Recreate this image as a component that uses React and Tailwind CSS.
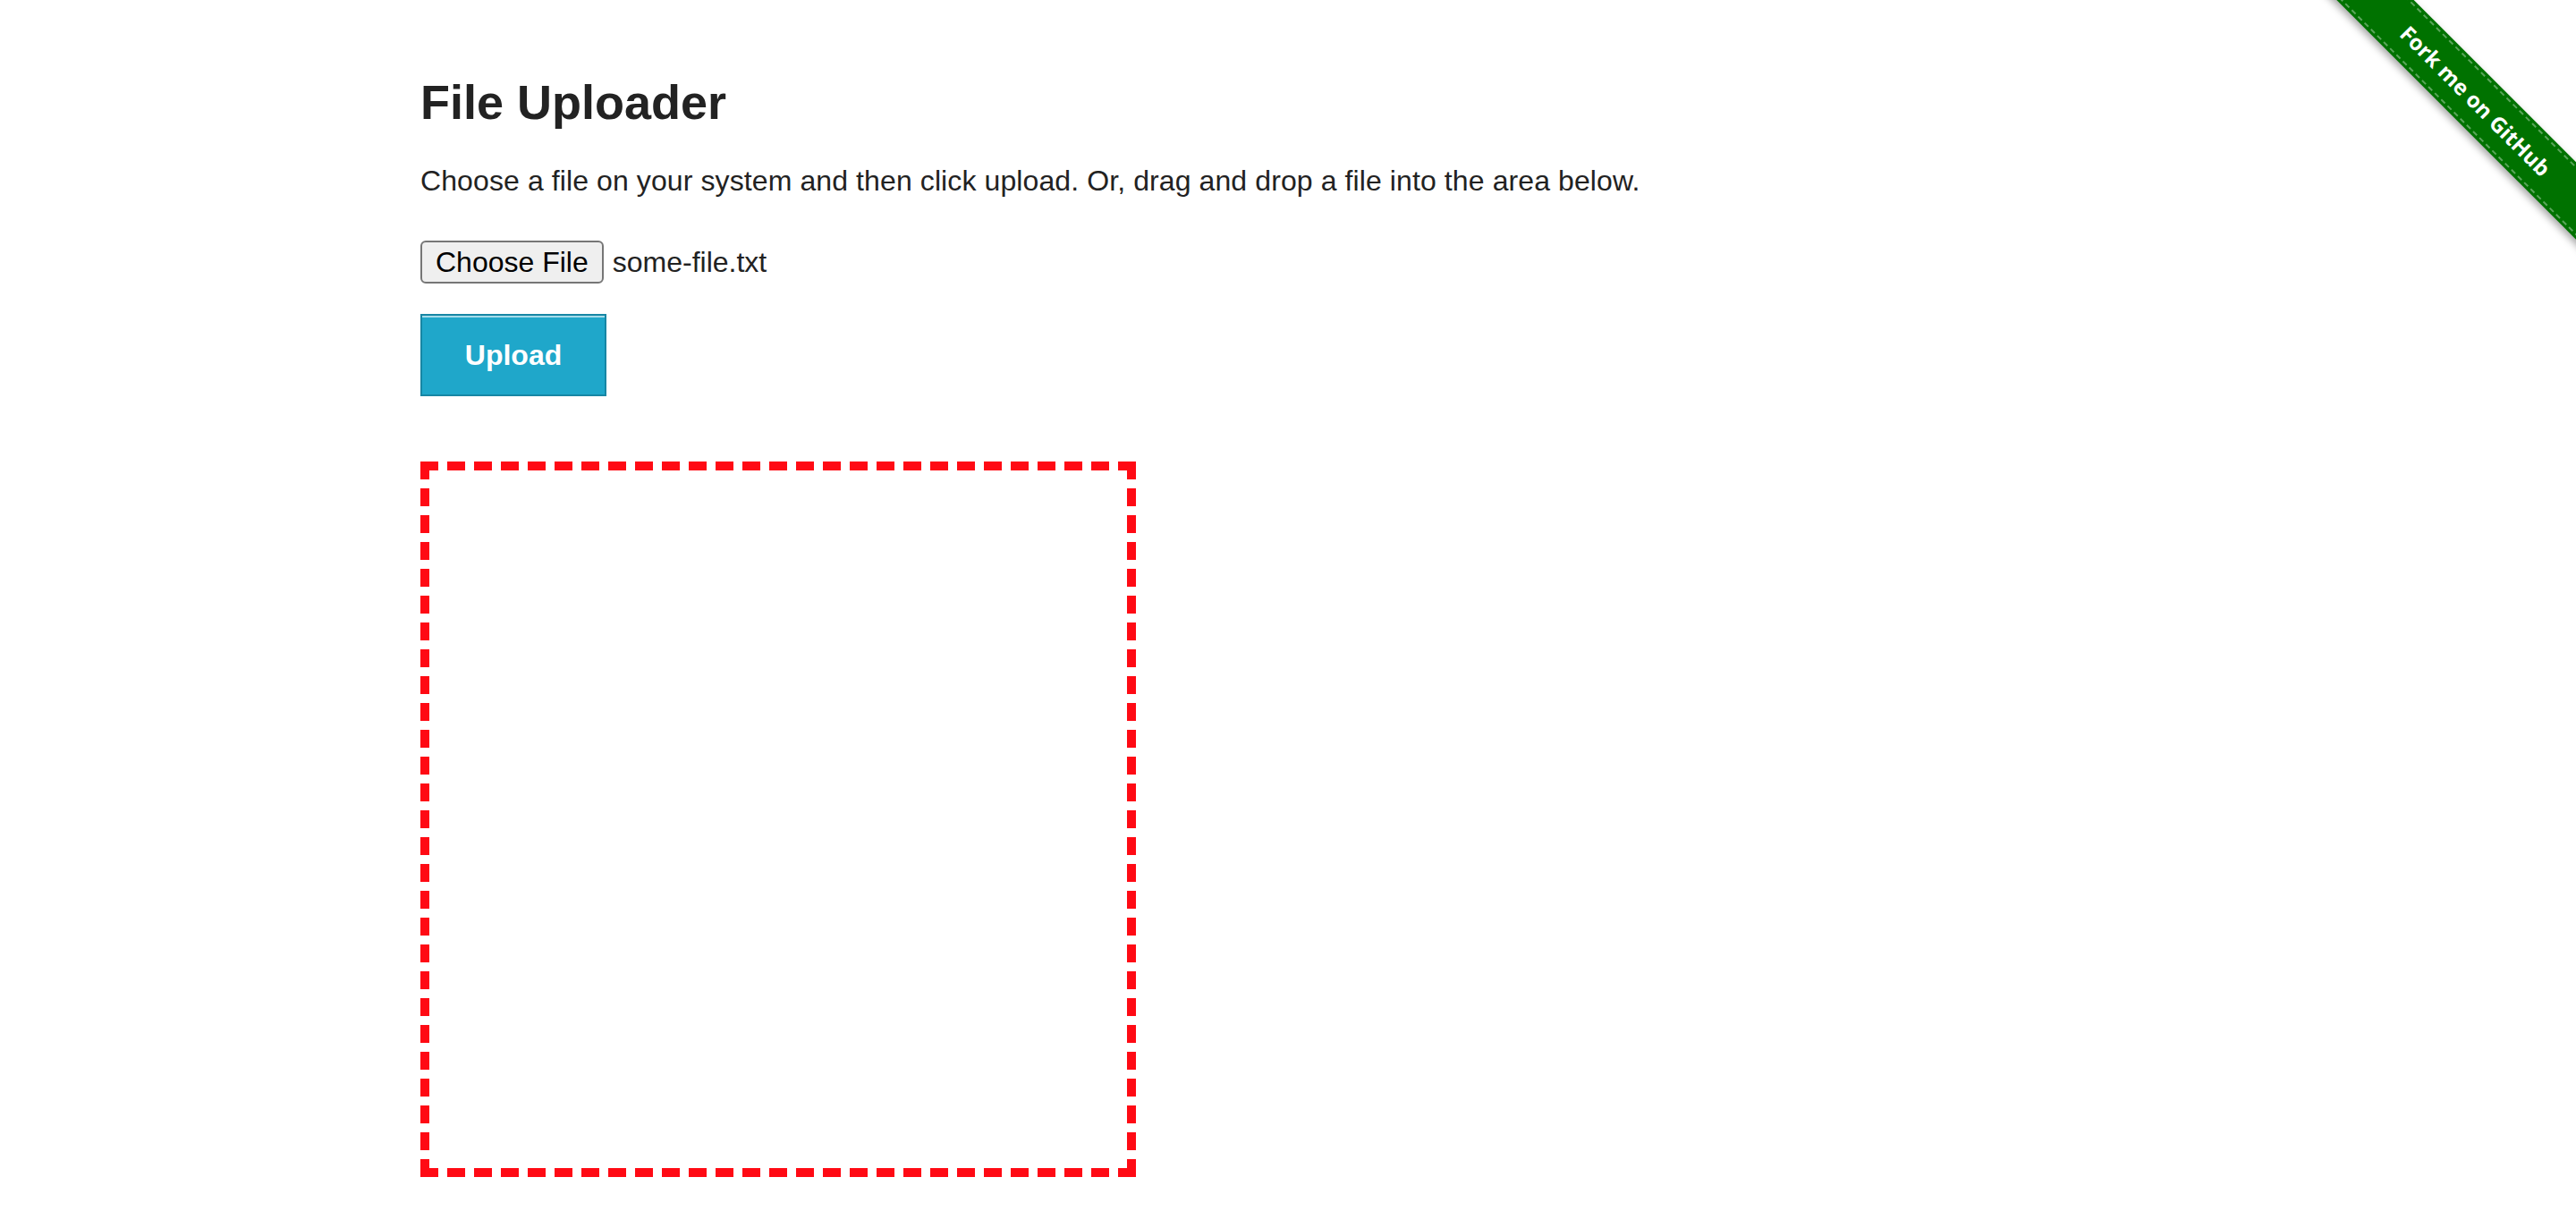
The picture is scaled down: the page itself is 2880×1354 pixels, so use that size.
import React from "react";

function ForkRibbon() {
  return (
    <div className="absolute top-0 right-0 w-[298px] h-[298px] overflow-hidden pointer-events-none">
      <div className="absolute left-[-24px] top-[82px] w-[420px] h-[61px] rotate-45 bg-[#007200] py-[3px] shadow-[0_4px_8px_rgba(0,0,0,0.35)]">
        <div className="h-full flex items-center justify-center border-y-2 border-dashed border-[#5aa55a]">
          <span
            className="text-white text-[24px] font-bold"
            style={{ fontFamily: '"Open Sans", "DejaVu Sans", sans-serif' }}
          >
            Fork me on GitHub
          </span>
        </div>
      </div>
    </div>
  );
}

export default function App() {
  return (
    <div
      className="relative min-h-[1354px] bg-white text-[#222]"
      style={{ fontFamily: '"Liberation Sans", Arial, sans-serif' }}
    >
      <ForkRibbon />
      <div className="pl-[470px] pt-[84px]">
        <h1 className="text-[54px] leading-[60px] font-bold">File Uploader</h1>
        <p className="mt-[38px] text-[32px] leading-[40px] tracking-[0.1px]">
          Choose a file on your system and then click upload. Or, drag and drop a file into the area below.
        </p>

        <div className="mt-[47px] flex items-center">
          <button className="h-[48px] px-[15px] bg-[#efefef] border-2 border-[#767676] rounded-[6px] text-[32px] leading-none text-black">
            Choose File
          </button>
          <span className="ml-[10px] text-[32px] leading-[40px]">some-file.txt</span>
        </div>

        <button className="mt-[34px] w-[208px] h-[92px] bg-[#1fa7ca] border-2 border-[#1786a4] shadow-[inset_0_2px_0_rgba(255,255,255,0.6)] text-white text-[32px] font-bold">
          Upload
        </button>

        <div className="mt-[73px] w-[800px] h-[800px] border-[10px] border-dashed border-[#ff0a14]"></div>
      </div>
    </div>
  );
}
